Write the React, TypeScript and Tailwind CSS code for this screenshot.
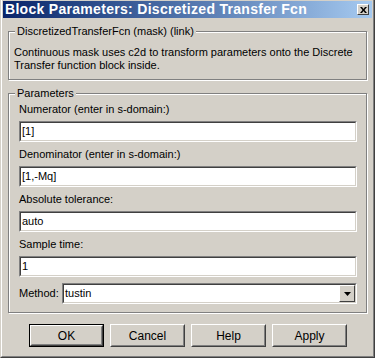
import React from 'react'

const font = { fontFamily: '"Liberation Sans", Arial, sans-serif' }

const Field: React.FC<{ label: string; value: string }> = ({ label, value }) => (
  <div className="flex flex-col">
    <div className="h-[13px] leading-[13px]">{label}</div>
    <div className="mt-[5px] mb-[6px] h-[21px] border border-t-[#808080] border-l-[#808080] border-b-white border-r-white">
      <div className="h-full border border-t-[#404040] border-l-[#404040] border-b-[#D4D0C8] border-r-[#D4D0C8] bg-white pl-px leading-[17px]">
        {value}
      </div>
    </div>
  </div>
)

const Button: React.FC<{ label: string; primary?: boolean }> = ({ label, primary }) => (
  <div className={primary ? 'w-[75px] h-[23px] border border-black' : 'w-[75px] h-[23px]'}>
    <div className="h-full border border-t-white border-l-white border-b-[#404040] border-r-[#404040]">
      <div className="h-full border border-t-[#D4D0C8] border-l-[#D4D0C8] border-b-[#808080] border-r-[#808080] flex items-center justify-center text-[12px]">
        {label}
      </div>
    </div>
  </div>
)

export default function App() {
  return (
    <div
      className="w-[375px] h-[358px] bg-[#D4D0C8] border-l border-r border-b border-l-[#D4D0C8] border-r-[#404040] border-b-[#404040] text-[11px] text-black"
      style={font}
    >
      <div className="h-full border-l border-r border-b border-l-white border-r-[#808080] border-b-[#808080] p-px pt-px flex flex-col">
        {/* title bar */}
        <div className="h-[17px] flex items-center justify-between bg-gradient-to-r from-[#0A246A] to-[#A6CAF0] pl-[2px] pr-[2px]">
          <span className="text-white font-bold text-[14px] tracking-[0.3px] leading-[17px]">
            Block Parameters: Discretized Transfer Fcn
          </span>
          <div className="w-[12px] h-[11px] mr-[1px] bg-[#D4D0C8] border border-t-white border-l-white border-b-[#404040] border-r-[#404040] flex items-center justify-center">
            <svg width="7" height="6" viewBox="0 0 7 6">
              <path d="M0 0h2l1.5 2L5 0h2L4.5 3 7 6H5L3.5 4 2 6H0l2.5-3z" fill="#000" />
            </svg>
          </div>
        </div>

        {/* mask description */}
        <fieldset className="mt-[7px] mx-[5px] px-[5px] pt-[8px] pb-[7px] border border-[#808080] shadow-[inset_1px_1px_0_#fff,1px_1px_0_#fff]">
          <legend className="ml-[1px] px-[2px] bg-[#D4D0C8] leading-[13px]">DiscretizedTransferFcn (mask) (link)</legend>
          <p className="leading-[13px]">
            Continuous mask uses c2d to transform parameters onto the Discrete
            <br />
            Transfer function block inside.
          </p>
        </fieldset>

        {/* parameters */}
        <fieldset className="mt-[7px] mx-[5px] pl-[10px] pr-[9px] pt-[3px] pb-[8px] border border-[#808080] shadow-[inset_1px_1px_0_#fff,1px_1px_0_#fff]">
          <legend className="-ml-[4px] px-[2px] bg-[#D4D0C8] leading-[13px]">Parameters</legend>
          <Field label="Numerator (enter in s-domain:)" value="[1]" />
          <Field label="Denominator (enter in s-domain:)" value="[1,-Mq]" />
          <Field label="Absolute tolerance:" value="auto" />
          <Field label="Sample time:" value="1" />
          <div className="flex items-center">
            <span className="w-[43px]">Method:</span>
            <div className="flex-1 h-[21px] border border-t-[#808080] border-l-[#808080] border-b-white border-r-white">
              <div className="h-full border border-t-[#404040] border-l-[#404040] border-b-[#D4D0C8] border-r-[#D4D0C8] bg-white flex">
                <span className="flex-1 pl-px leading-[17px]">tustin</span>
                <div className="w-[16px] h-[17px] bg-[#D4D0C8] border border-t-white border-l-white border-b-[#404040] border-r-[#404040] flex items-center justify-center">
                  <svg width="7" height="4" viewBox="0 0 7 4">
                    <path d="M0 0h7L3.5 4z" fill="#000" />
                  </svg>
                </div>
              </div>
            </div>
          </div>
        </fieldset>

        {/* buttons */}
        <div className="mt-[11px] pl-[26px] flex gap-[6px]">
          <Button label="OK" primary />
          <Button label="Cancel" />
          <Button label="Help" />
          <Button label="Apply" />
        </div>
      </div>
    </div>
  )
}
